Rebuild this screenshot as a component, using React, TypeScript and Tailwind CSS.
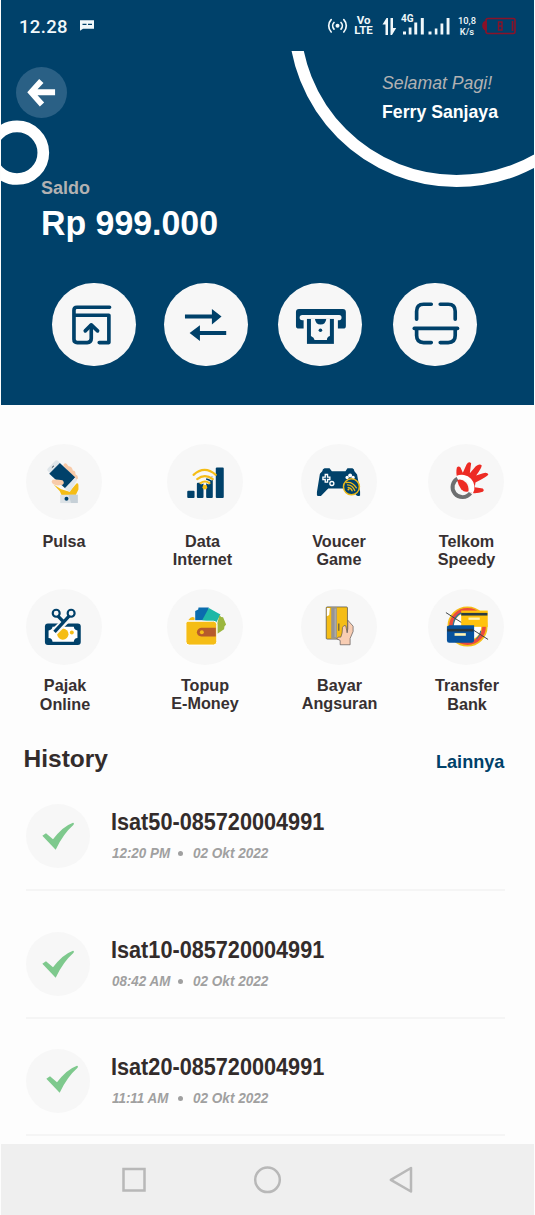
import type { ReactNode } from "react";

const NAVY = "#00416a";

/* ---------- status bar ---------- */

function StatusBar() {
  return (
    <div className="flex h-[51px] items-start pl-[18px] text-[#f1f8fb]">
      <span className="mt-[13px] w-[50px] whitespace-nowrap font-['Roboto'] text-[18.5px] leading-[28px] font-medium tracking-[0.35px]">
        12.28
      </span>
      <svg className="mt-[19px] ml-[11px] h-[13px] w-[15px]" viewBox="0 0 15 13">
        <path d="M0 1.200h14v8.500H3l-3 2z" fill="#f1f8fb" />
        <path d="M2.500 5.400h4M8 5.400h4" stroke={NAVY} strokeWidth="1.300" />
      </svg>
      <svg className="mt-[17px] ml-[232px] h-[18px] w-[21px]" viewBox="0 0 21 18" fill="none" stroke="#f1f8fb" strokeWidth="1.7" strokeLinecap="round">
        <circle cx="10.500" cy="8.800" r="2" fill="#f1f8fb" stroke="none" />
        <path d="M7 5.500a4.800 4.800 0 0 0 0 6.600M14 5.500a4.800 4.800 0 0 1 0 6.600M4.200 2.600a9 9 0 0 0 0 12.400M16.800 2.600a9 9 0 0 1 0 12.400" />
      </svg>
      <div className="mt-[14px] ml-[5px] flex w-[21px] flex-col items-center font-['Roboto'] text-[11.500px] font-bold">
        <span className="h-[10px] leading-[12px]">Vo</span>
        <span className="h-[12px] leading-[13px]">LTE</span>
      </div>
      <svg className="mt-[17px] ml-[8px] h-[19px] w-[15px]" viewBox="0 0 15 19" fill="#f1f8fb">
        <path d="M3.500 18V7.500H.500L4.500 1H6v17zM8.500 1H11v10h3.200L10 18H8.500z" />
      </svg>
      <div className="ml-[4px] flex w-[49px] flex-col">
        <span className="mt-[12px] font-['Roboto'] text-[10px] leading-[13px] font-bold">4G</span>
        <svg className="-mt-[8px] ml-[2px] h-[18px] w-[47px]" viewBox="403 17 47 18" fill="#f1f8fb">
          <path d="M403 31.500h3V34.500h-3zM408.700 27.500h2.800v7h-2.800zM414.300 22.500h2.900v12h-2.900zM420.800 18h3v16.500h-3z" />
          <path d="M428.500 31.500h3V34.500h-3zM434.800 28.500h2.600v6h-2.600zM440.500 23.500h2.800v11h-2.800zM446.600 18h2.900v16.500h-2.900z" />
        </svg>
      </div>
      <div className="mt-[15px] ml-[7px] flex w-[20px] flex-col items-center font-['Roboto'] text-[9.300px] leading-[11px] font-medium">
        <span>10,8</span>
        <span>K/s</span>
      </div>
      <svg className="mt-[17px] ml-[5px] h-[18px] w-[35px]" viewBox="0 0 35 18" fill="none" stroke="#8a1228" strokeWidth="1.600">
        <path d="M6 1.500h25.500q1.500 0 1.500 1.500v12q0 1.500-1.500 1.500H6q-2 0-2-2v-11q0-2 2-2z" />
        <path d="M4 4.500Q1 5 1 8.500T4 13z" fill="#8a1228" />
        <path d="M16.500 5h3.500v8h-3.500zM16.500 9h3.500" strokeWidth="1.400" />
        <path d="M30.500 4v10" strokeWidth="1.600" />
      </svg>
    </div>
  );
}

/* ---------- quick actions ---------- */

function Action({ viewBox, className, children }: { viewBox: string; className: string; children: ReactNode }) {
  return (
    <button className={"h-[83.5px] w-[83.5px] rounded-full bg-[#f7f7f7] " + className}>
      <svg viewBox={viewBox} className="h-full w-full" fill="none" stroke={NAVY}>
        {children}
      </svg>
    </button>
  );
}

function Header() {
  return (
    <div className="relative h-[354px]">
      <svg className="absolute inset-0 h-[354px] w-[533px]" viewBox="1 51 533 354" fill="none" stroke="#fff">
        <circle cx="17" cy="152.700" r="26.300" strokeWidth="11.700" />
        <circle cx="456.500" cy="19" r="162" strokeWidth="12" />
      </svg>
      <div className="relative flex items-start pt-[16px] pl-[14.5px]">
        <button className="h-[51px] w-[51px] rounded-full bg-[#2a6085]">
          <svg viewBox="47 200 154 154" className="h-full w-full">
            <path d="M81 276L117 236 130 248 112 267H165V285H112L132 307 119 319z" fill="#fff" />
          </svg>
        </button>
        <div className="mt-[2px] ml-[315.500px] text-[17.700px] leading-[29px] whitespace-nowrap">
          <p className="text-[#b2b1b2] italic">Selamat Pagi!</p>
          <p className="font-bold text-white">Ferry Sanjaya</p>
        </div>
      </div>
      <div className="relative mt-[51px] pl-[40px] font-bold">
        <p className="text-[18px] leading-[20px] text-[#b2b1b2]">Saldo</p>
        <p className="mt-[5px] origin-left scale-x-[0.968] text-[35px] leading-[40px] whitespace-nowrap text-white">Rp 999.000</p>
      </div>
      <div className="relative mt-[39.500px] flex pl-[51px]">
        <Action viewBox="156 339 251 251" className="">
          <path d="M329 412H231Q222 412 222 421V508Q222 518 232 518H262Q274 518 274 506V466" strokeWidth="11" strokeLinecap="round" />
          <path d="M224 436H327V518H298" strokeWidth="11" strokeLinecap="round" strokeLinejoin="round" />
          <path d="M256 483L274 465 293 483" strokeWidth="11" strokeLinecap="round" strokeLinejoin="round" />
        </Action>
        <Action viewBox="492 339 251 251" className="ml-[28.500px]">
          <path d="M555 440H640M595 489H679" strokeWidth="12" />
          <path d="M636 417L665 440 636 464zM600 466L569 489 600 513z" fill={NAVY} stroke="none" />
        </Action>
        <Action viewBox="33 39 251 251" className="ml-[30.500px]">
          <path d="M96 117H228Q237 117 237 126V168Q237 176 229 176H213V151H217Q224 151 224 143T217 135H106Q98 135 98 143T106 151H110V176H96Q87 176 87 168V126Q87 117 96 117z" fill={NAVY} stroke="none" />
          <path d="M120 147H201V222H120z" fill={NAVY} stroke="none" />
          <path d="M132 147H189V198Q180 201 180 210H143Q142 202 132 198z" fill="#f7f7f7" stroke="none" />
          <path d="M144 147H178Q176 164 161 164T144 147z" fill={NAVY} stroke="none" />
          <circle cx="160.500" cy="181" r="5.500" fill={NAVY} stroke="none" />
        </Action>
        <Action viewBox="378 39 251 251" className="ml-[31.500px]">
          <g strokeWidth="11" strokeLinecap="round">
            <path d="M449 148V124Q449 103 470 103H493M520 103H544Q565 103 565 124V148" />
            <path d="M449 178V197Q449 218 470 218H493M520 218H544Q565 218 565 197V178" />
            <path d="M442 175.500H572" />
          </g>
        </Action>
      </div>
    </div>
  );
}

/* ---------- services ---------- */

function Service({ label, viewBox, labelClass = "", children }: { label: string[]; viewBox: string; labelClass?: string; children: ReactNode }) {
  return (
    <div className="flex w-[76px] flex-col items-center">
      <div className="h-[76px] w-[76px] shrink-0 rounded-full bg-[#f7f7f7]">
        <svg viewBox={viewBox} className="h-full w-full">{children}</svg>
      </div>
      <p className={"flex flex-col items-center text-[16.200px] font-bold whitespace-nowrap text-[#373031] " + labelClass}>
        {label.map((line) => <span key={line}>{line}</span>)}
      </p>
    </div>
  );
}

function Pulsa() {
  return (
    <>
      <path d="M116 148L139 162 164 170 185 145Q191 143 191 150V163L183 180H140L135 168z" fill="#f5bd16" />
      <path d="M145 90Q149 81 156 86L161 93Q170 92 173 101L174 106Q183 107 182 117 190 120 190 129L184 135 172 122z" fill="#f8cba9" />
      <path d="M122 76Q127 73 133 80L136 84 107 115 100 109Q94 104 99 99z" fill="#dfe5e9" />
      <path d="M135 83L181 126 154 162 103 116z" fill={NAVY} />
      <path d="M181 127L187 135 165 171 149 160z" fill="#e2e7eb" />
      <path d="M111 97L117 92" stroke="#273c4c" strokeWidth="3" />
      <path d="M113 134Q122 131 143 135 151 143 143 149L129 151Q113 150 110 140z" fill="#f8cba9" />
      <path d="M136 179H189V204H136z" fill="#dce2e6" />
      <path d="M161 179H189V204H169z" fill="#c6d0d7" />
      <circle cx="155" cy="191" r="6" fill={NAVY} />
    </>
  );
}

function DataInternet() {
  return (
    <>
      <g fill={NAVY}>
        <rect x="517" y="167" width="22" height="22" rx="3" />
        <rect x="546" y="143" width="20" height="46" rx="3" />
        <rect x="574" y="124" width="20" height="65" rx="3" />
        <rect x="603" y="97" width="24" height="92" rx="3" />
      </g>
      <g fill="none" stroke="#f7f7f7" strokeWidth="10">
        <path d="M540 119Q569 91 599 119M547 132Q570 114 594 132M557 144Q570 134 584 144" />
      </g>
      <g fill="none" stroke="#f5bd16" strokeWidth="6.500" strokeLinecap="round">
        <path d="M536 119Q569 89 603 119M547 132Q570 113 594 132M557 144Q570 134 584 144" />
      </g>
      <circle cx="570" cy="156" r="7" fill="#f5bd16" />
    </>
  );
}

function VoucerGame() {
  return (
    <>
      <path d="M104 99H119L126 108H167L173 99H188Q193 101 194 108L202 118 211 169V181Q204 185 199 180L181 160H115L93 183H83Q80 181 81 171L90 116 97 108Q98 101 104 99z" fill={NAVY} />
      <path d="M106 118V126H99V133H106V141H113V133H120V126H113V118z" fill={NAVY} stroke="#fff" strokeWidth="4" />
      <circle cx="126" cy="145" r="6" fill={NAVY} stroke="#fff" strokeWidth="4" />
      <circle cx="181" cy="121" r="6" fill="#fff" />
      <circle cx="172" cy="127" r="5" fill="#fff" /><circle cx="190" cy="127" r="5" fill="#fff" />
      <circle cx="185" cy="155" r="24" fill={NAVY} stroke="#ecb91b" strokeWidth="4.500" />
      <g fill="none" stroke="#ecb91b" strokeWidth="4" strokeLinecap="round">
        <path d="M173 149Q188 149 195 166M175 157Q184 158 187 167M170 142Q188 139 200 158" />
      </g>
      <circle cx="176" cy="163" r="3" fill="#ecb91b" />
    </>
  );
}

function TelkomSpeedy() {
  return (
    <>
      <path d="M500 132Q494 113 498 97 503 90 509 97L516 113 527 88Q534 77 541 84L537 114 555 93Q567 84 573 91 572 100 556 121L577 114Q590 110 593 118 590 124 554 142L552 156 576 160Q582 166 576 170 562 176 542 174L515 150z" fill="#ed2b24" />
      <circle cx="511" cy="156" r="31" fill="#f7f7f7" />
      <path d="M502 129A30 30 0 1 0 539 174" fill="none" stroke="#6d6f70" strokeWidth="12" />
      <path d="M499 129A31 31 0 0 1 540 172" fill="none" stroke="#fff" strokeWidth="14" />
      <path d="M499 135Q512 129 526 143 534 152 533 168 522 174 511 162 503 153 499 135z" fill="#ed2b24" />
    </>
  );
}

function PajakOnline() {
  return (
    <>
      <rect x="90" y="129" width="108" height="65" rx="9" fill={NAVY} />
      <path d="M113 139H177Q178 149 188 150V173Q178 174 177 184H113Q112 174 101 173V150Q112 149 113 139z" fill="#fff" />
      <circle cx="144" cy="161" r="17" fill="#f5bd16" />
      <circle cx="171" cy="156" r="6" fill="#f5bd16" />
      <path d="M118 155L156 117" stroke="#f7f7f7" strokeWidth="22" />
      <path d="M119 154L164 105M128 105L147 125" stroke={NAVY} strokeWidth="10" />
      <circle cx="124" cy="98" r="10.500" fill="#f7f7f7" stroke={NAVY} strokeWidth="6.500" />
      <circle cx="169" cy="98" r="10.500" fill="#f7f7f7" stroke={NAVY} strokeWidth="6.500" />
    </>
  );
}

function TopupEMoney() {
  return (
    <>
      <path d="M520 119Q530 105 539 112V119z" fill="#f5bd16" />
      <path d="M541 119V91L550 87 551 81H582L574 119z" fill="#0b6cae" />
      <path d="M562 119L582 82 617 102 604 127z" fill="#1eb8a6" />
      <path d="M614 103L619 109 625 110 634 132 629 138 628 146 608 160V127z" fill="#9bb63e" />
      <path d="M519 122H596Q606 122 606 132V184Q606 194 596 194H523Q513 194 513 184V128Q513 122 519 122z" fill="#f5bd16" stroke="#fff" strokeWidth="3" />
      <path d="M559 142H603V168H559Q547 166 546 155 547 144 559 142z" fill="#b65b2c" />
      <circle cx="561" cy="155" r="6" fill="#f5bd16" />
    </>
  );
}

function BayarAngsuran() {
  return (
    <>
      <rect x="109" y="79" width="64" height="97" rx="3" fill="#f5bd16" stroke="#454546" strokeWidth="2" />
      <path d="M124 80H141V175H124z" fill="#969493" />
      <path d="M111 82H120L118 103 111 107z" fill="#fff" />
      <path d="M136 84V170" stroke="#b6b4b2" strokeWidth="3" />
      <path d="M147 129V151" stroke="#454546" strokeWidth="3" />
      <path d="M174 119L190 137V153L181 174V193H151V180L141 175 145 170H153Q158 160 158 141 162 132 168 136L172 157 174 145z" fill="#f8cdb3" stroke="#555050" strokeWidth="2" strokeLinejoin="round" />
    </>
  );
}

function TransferBank() {
  return (
    <>
      <circle cx="530" cy="138" r="51" fill="#fff" stroke="#f5bd16" strokeWidth="19" />
      <circle cx="530" cy="138" r="50" fill="none" stroke="#ec4b3e" strokeWidth="11" />
      <path d="M486 138Q490 104 513 96" fill="none" stroke="#2472a4" strokeWidth="4" />
      <path d="M570 151Q569 164 557 176" fill="none" stroke="#2472a4" strokeWidth="3" />
      <path d="M465 96L592 177" stroke="#3d4347" strokeWidth="3" />
      <path d="M511 90H591V139H511z" fill="#ffc20e" />
      <path d="M511 97H590V105H511z" fill="#293b43" />
      <path d="M533 111H567V118H533z" fill="#fff3b4" />
      <path d="M468 138L475 134H550V179Q550 187 542 187H475Q468 187 468 180z" fill="#07529d" />
      <path d="M469 145H548V153H469z" fill="#253540" />
      <path d="M491 158H525V166H491z" fill="#fff3b4" />
    </>
  );
}

function Services() {
  return (
    <div className="h-[333px] pt-[39px] pl-[25px]">
      <div className="flex h-[145px]">
        <Service label={["Pulsa"]} viewBox="33 26 229 229" labelClass="mt-[12px] leading-[18px]"><Pulsa /></Service>
        <div className="w-[65px]" />
        <Service label={["Data", "Internet"]} viewBox="456 26 229 229" labelClass="mt-[12px] -ml-[5px] leading-[18px]"><DataInternet /></Service>
        <div className="w-[58px]" />
        <Service label={["Voucer", "Game"]} viewBox="33 26 229 229" labelClass="mt-[12px] leading-[18px]"><VoucerGame /></Service>
        <div className="w-[51px]" />
        <Service label={["Telkom", "Speedy"]} viewBox="411 26 229 229" labelClass="mt-[12px] ml-px leading-[18px]"><TelkomSpeedy /></Service>
      </div>
      <div className="flex">
        <Service label={["Pajak", "Online"]} viewBox="33 25 229 229" labelClass="mt-[11px] ml-[2px] leading-[19px]"><PajakOnline /></Service>
        <div className="w-[65px]" />
        <Service label={["Topup", "E-Money"]} viewBox="456 25 229 229" labelClass="mt-[11px] leading-[18px]"><TopupEMoney /></Service>
        <div className="w-[58px]" />
        <Service label={["Bayar", "Angsuran"]} viewBox="33 25 229 229" labelClass="mt-[11px] ml-px leading-[18px]"><BayarAngsuran /></Service>
        <div className="w-[51px]" />
        <Service label={["Transfer", "Bank"]} viewBox="411 25 229 229" labelClass="mt-[11px] ml-[2px] leading-[19px]"><TransferBank /></Service>
      </div>
    </div>
  );
}

/* ---------- history ---------- */

const history = [
  { name: "Isat50-085720004991", time: "12:20 PM", row: "h-[88px]", tick: "" },
  { name: "Isat10-085720004991", time: "08:42 AM", row: "mt-[40px] h-[88px]", tick: "" },
  { name: "Isat20-085720004991", time: "11:11 AM", row: "mt-[29px] h-[88px]", tick: "ml-[4px] -mt-[2px]" },
];

function History() {
  return (
    <div className="h-[406px] overflow-hidden">
      <div className="flex h-[65px] items-start pl-[22.500px] font-bold">
        <h2 className="mt-[7px] w-[412.500px] text-[24.500px] leading-[28px] text-[#332c2b]">History</h2>
        <a className="mt-[13px] text-[18.100px] leading-[22px] text-[#00416a]">Lainnya</a>
      </div>
      {history.map((item) => (
        <div key={item.name} className={"ml-[25px] flex w-[479px] border-b-[2px] border-[#f5f5f5] " + item.row}>
          <div className="mt-px h-[64px] w-[64px] shrink-0 rounded-full bg-[#f7f7f7]">
            <svg viewBox="78 207 192 192" className={"h-[64px] w-[64px] " + item.tick}>
              <path d="M127 302L138 295 159 313Q188 274 219 263 224 264 220 270 190 296 167 344z" fill="#7ec98d" />
            </svg>
          </div>
          <div className="ml-[20.500px] font-bold whitespace-nowrap">
            <p className="mt-[6px] origin-left text-[23.500px] leading-[26px] text-[#332c2b] scale-x-[0.922]">{item.name}</p>
            <div className="mt-[10px] flex items-center text-[14.200px] leading-[16px] text-[#a0a0a0] italic">
              <span className="ml-px w-[66px] origin-left scale-x-[0.944]">{item.time}</span>
              <span className="h-[5px] w-[5px] rounded-full bg-[#a0a0a0]" />
              <span className="ml-[10px] origin-left scale-x-[0.955]">02 Okt 2022</span>
            </div>
          </div>
        </div>
      ))}
    </div>
  );
}

function NavBar() {
  return (
    <div className="flex h-[71px] items-center bg-[#efefef] pl-[117px]">
      <svg className="h-[32px] w-[32px]" viewBox="0 0 32 32" fill="none" stroke="#b8b8b8" strokeWidth="2.500">
        <path d="M5.500 5h21v21.500h-21z" />
      </svg>
      <svg className="ml-[101px] h-[32px] w-[32px]" viewBox="0 0 32 32" fill="none" stroke="#b8b8b8" strokeWidth="2.500">
        <circle cx="16.500" cy="15.800" r="12.300" />
      </svg>
      <svg className="ml-[101px] h-[32px] w-[32px]" viewBox="0 0 32 32" fill="none" stroke="#b8b8b8" strokeWidth="2.500" strokeLinejoin="round">
        <path d="M27 4v23.500L6.800 15.800z" />
      </svg>
    </div>
  );
}

export default function App() {
  return (
    <main className="h-[1215px] w-[535px] overflow-hidden bg-[#fdfdfd] px-px font-['Liberation_Sans',sans-serif]">
      <header className="h-[405px] bg-[#00416a]">
        <StatusBar />
        <Header />
      </header>
      <Services />
      <History />
      <NavBar />
    </main>
  );
}
